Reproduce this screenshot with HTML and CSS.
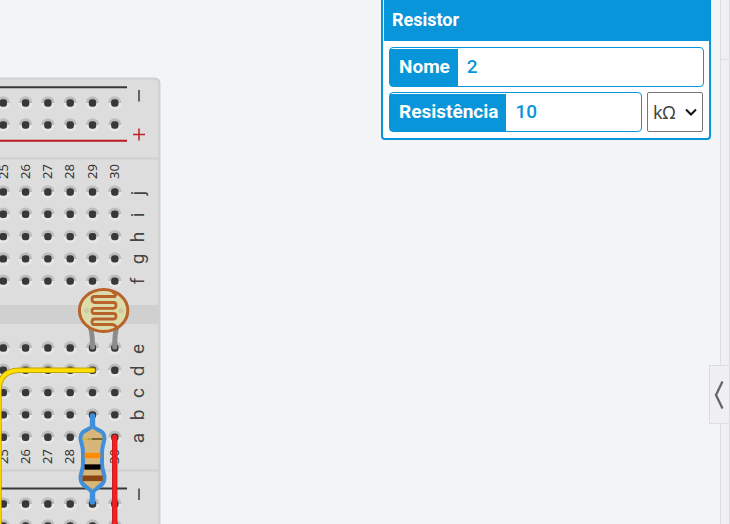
FILE: index.html
```html
<!DOCTYPE html>
<html lang="pt">
<head>
<meta charset="utf-8">
<title>Circuito</title>
<link rel="stylesheet" href="styles.css">
</head>
<body>
<main class="editor">
  <section class="workspace">
    <svg class="board" width="380" height="524" viewBox="0 0 380 524" role="img" aria-label="Placa de ensaio">
      <defs>
        <g id="hole">
          <circle r="6.7" fill="#e7e7e7"/>
          <path d="M-6.7 0a6.7 6.7 0 0 1 13.4 0z" fill="#bdbdbd"/>
          <rect x="-3.7" y="-3.7" width="7.4" height="7.4" rx="3" fill="#383838"/>
        </g>
        <g id="row">
          <use href="#hole" x="3.3"/><use href="#hole" x="25.6"/><use href="#hole" x="47.9"/>
          <use href="#hole" x="70.2"/><use href="#hole" x="92.5"/><use href="#hole" x="114.8"/>
        </g>
      </defs>
      <path d="M-5 77.500H154.500Q160.500 77.500 160.500 83.500V530H-5z" fill="#cfd0d1"/>
      <path d="M-5 79.500H153.500Q158.300 79.500 158.300 84.500V530H-5z" fill="#dddddd"/>
      <path d="M0 158.500H160M0 470.500H160" stroke="#d0d0d0" stroke-width="2"/>
      <rect y="305" width="158.300" height="19" fill="#d0d0d0"/>
      <path d="M0 87.300H127M0 488.400H127" stroke="#37383a" stroke-width="2"/>
      <path d="M0 140.800H127" stroke="#bb1a20" stroke-width="2"/>
      <path d="M139 90V101.500M139 488.500V500" stroke="#3c3c3c" stroke-width="1.500"/>
      <path d="M133 134.500H145M139 128.500V140.500" stroke="#c02025" stroke-width="1.500"/>

      <use href="#row" y="103"/><use href="#row" y="125"/>
      <use href="#row" y="192"/><use href="#row" y="214.300"/><use href="#row" y="236.600"/><use href="#row" y="258.900"/><use href="#row" y="281.100"/>
      <use href="#row" y="348"/><use href="#row" y="370.300"/><use href="#row" y="392.600"/><use href="#row" y="414.900"/><use href="#row" y="437.200"/>
      <use href="#row" y="504"/><use href="#row" y="526"/>

      <g class="column-label">
        <text transform="translate(8 171.500) rotate(-90)">25</text>
        <text transform="translate(30 171.500) rotate(-90)">26</text>
        <text transform="translate(52 171.500) rotate(-90)">27</text>
        <text transform="translate(74 171.500) rotate(-90)">28</text>
        <text transform="translate(97 171.500) rotate(-90)">29</text>
        <text transform="translate(119 171.500) rotate(-90)">30</text>
        <text transform="translate(8 456.500) rotate(-90)">25</text>
        <text transform="translate(30 456.500) rotate(-90)">26</text>
        <text transform="translate(52 456.500) rotate(-90)">27</text>
        <text transform="translate(74 456.500) rotate(-90)">28</text>
        <text transform="translate(97 456.500) rotate(-90)">29</text>
        <text transform="translate(119 456.500) rotate(-90)">30</text>
      </g>
      <g class="row-label">
        <text transform="translate(144 193) rotate(-90)">j</text>
        <text transform="translate(144 215) rotate(-90)">i</text>
        <text transform="translate(144 237) rotate(-90)">h</text>
        <text transform="translate(144 259) rotate(-90)">g</text>
        <text transform="translate(144 281) rotate(-90)">f</text>
        <text transform="translate(144 349) rotate(-90)">e</text>
        <text transform="translate(144 371) rotate(-90)">d</text>
        <text transform="translate(144 393) rotate(-90)">c</text>
        <text transform="translate(144 415) rotate(-90)">b</text>
        <text transform="translate(144 438) rotate(-90)">a</text>
      </g>

      <g fill="none" stroke-linecap="round" stroke-linejoin="round">
        <path d="M90 327Q92.500 332 92.500 347M117 327Q114.700 332 114.700 347" stroke="#8c8c8c" stroke-width="5"/>
        <ellipse cx="103.600" cy="310.500" rx="24.200" ry="21" fill="#dcdbaa" stroke="#b8632b" stroke-width="3"/>
        <g fill="#c9caa2"><circle cx="86.500" cy="310.500" r="2.500"/><circle cx="121" cy="310.500" r="2.500"/></g>
        <path d="M113 292.500Q117 294 115 296.500H94.500Q92 296.500 92 299.300T94.500 302.500H113.500Q116 302.500 116 305.300T113.500 308.300H94.500Q92 308.300 92 311T94.500 313.500H113.500Q116 313.500 116 316.300T113.500 319H94.500Q92 319 92 322T94.500 324.500H111.500Q115 324.500 116.500 327.500" stroke="#b8632b" stroke-width="2.800"/>
        <path d="M-1 530V391Q-1 370.300 20 370.300H93" stroke="#c4a400" stroke-width="5.400"/>
        <path d="M-1 530V391Q-1 370.300 20 370.300H93" stroke="#ffdf00" stroke-width="3.600"/>
      </g>

      <path d="M92.500 416V426M92.500 493V502" stroke="#3f8fda" stroke-width="5.400" stroke-linecap="round"/>
      <path d="M92.500 426C88 431 80.500 430 80.500 438C81 444 83 445 83 453V464C83 471 80.500 472 80.500 478C80.500 486 89 487 92.500 493C96 487 104.500 486 104.500 478C104.500 472 102 471 102 464V453C102 445 104 444 104.500 438C104.500 430 97 431 92.500 426z" fill="#d8b579" stroke="#3f8fda" stroke-width="4" stroke-linejoin="round"/>
      <path d="M82.500 439H88" stroke="#cdb640" stroke-width="2"/>
      <path d="M88 439H92" stroke="#b39a55" stroke-width="2"/>
      <path d="M92 439H102.500" stroke="#7b6530" stroke-width="2"/>
      <path d="M84.500 455.500H100.500" stroke="#ff8b00" stroke-width="5.300"/>
      <path d="M84.500 467H100.500" stroke="#000000" stroke-width="5.300"/>
      <path d="M82.500 478.300H102.700" stroke="#8b4513" stroke-width="5.600"/>
      <path d="M114.700 437V530" stroke="#c81818" stroke-width="5.400" stroke-linecap="round"/>
      <path d="M114.700 437V530" stroke="#ee2222" stroke-width="4" stroke-linecap="round"/>
    </svg>

    <form class="inspector">
      <h1 class="inspector-title">Resistor</h1>
      <div class="inspector-body">
        <div class="field">
          <label class="field-label" for="name">Nome</label>
          <input class="field-input" id="name" type="text" value="2">
        </div>
        <div class="field-row">
          <div class="field">
            <label class="field-label" for="resistance">Resistência</label>
            <input class="field-input" id="resistance" type="text" value="10">
          </div>
          <div class="unit">
            <select class="unit-select" aria-label="Unidade"><option>kΩ</option></select>
            <svg class="unit-arrow" width="12" height="8" viewBox="0 0 12 8" aria-hidden="true"><path d="M1 1.500L6 6.500L11 1.500" fill="none" stroke="#111" stroke-width="2"/></svg>
          </div>
        </div>
      </div>
    </form>
  </section>
  <aside class="sidebar">
    <div class="sidebar-header"></div>
    <button class="sidebar-toggle" type="button" aria-label="Abrir painel">
      <svg width="12" height="28" viewBox="0 0 12 28" aria-hidden="true"><path d="M8.500 0.500L2 14L8.500 27.500" fill="none" stroke="#666" stroke-width="2.300"/></svg>
    </button>
  </aside>
</main>
</body>
</html>
```
FILE: styles.css
```css
* {
  box-sizing: border-box;
}

body {
  margin: 0;
  font-family: Roboto, "Liberation Sans", sans-serif;
  background: #f3f4f6;
}

.editor {
  display: flex;
  height: 100vh;
  overflow: hidden;
}

.workspace {
  position: relative;
  flex: 1;
  min-width: 0;
}

.board {
  display: block;
}

.column-label {
  font: 13px "Noto Sans", sans-serif;
  text-anchor: middle;
  fill: #333;
}

.row-label {
  font: 400 19px Roboto, sans-serif;
  text-anchor: middle;
  fill: #444;
}

.inspector {
  position: absolute;
  top: -4px;
  right: 9px;
  width: 330px;
  padding: 1px;
  border: 2px solid #0995d9;
  border-radius: 4px;
  background: #fff;
}

.inspector-title {
  margin: 0 -1px 0 0;
  padding: 6px 8px 8px;
  height: 42px;
  font-size: 18px;
  font-weight: 700;
  line-height: 30px;
  color: #fff;
  background: #0995d9;
}

.inspector-body {
  display: grid;
  grid-template-columns: minmax(0, 1fr);
  gap: 5px;
  padding: 6px 4px 5px 5px;
}

.field {
  display: flex;
  flex: 1;
  min-width: 0;
  height: 40px;
  padding-top: 1px;
  border: 1px solid #0995d9;
  border-radius: 4px;
  background: #fff;
}

.field-row {
  display: flex;
  gap: 5px;
}

.field-label {
  padding: 0 8px 0 9px;
  font-size: 19px;
  font-weight: 700;
  line-height: 36px;
  color: #fff;
  background: #0995d9;
}

.field-input {
  flex: 1;
  min-width: 0;
  padding: 0 9px 2px;
  border: 0;
  outline: 0;
  font: 500 19px Roboto, sans-serif;
  color: #0995d9;
  background: transparent;
}

.unit {
  position: relative;
  flex: none;
  width: 57px;
  height: 40px;
  padding-right: 1px;
}

.unit-select {
  width: 100%;
  height: 100%;
  padding: 0 5px;
  appearance: none;
  border: 1px solid #767676;
  border-radius: 2px;
  font: 18px "Noto Sans", sans-serif;
  color: #444;
  background: #fff;
}

.unit-arrow {
  position: absolute;
  top: 16px;
  right: 7px;
  pointer-events: none;
}

.sidebar {
  position: relative;
  width: 10px;
  border-left: 1px solid #dcdde1;
  border-right: 1px solid #dcdde1;
  background: #f0f0f3;
}

.sidebar-header {
  height: 60px;
  border-bottom: 1px solid #dcdde1;
}

.sidebar-toggle {
  position: absolute;
  top: 365px;
  right: -1px;
  display: grid;
  place-items: center;
  width: 21px;
  height: 59px;
  padding: 0;
  border: 1px solid #dcdde1;
  background: #f0f0f3;
}
```
